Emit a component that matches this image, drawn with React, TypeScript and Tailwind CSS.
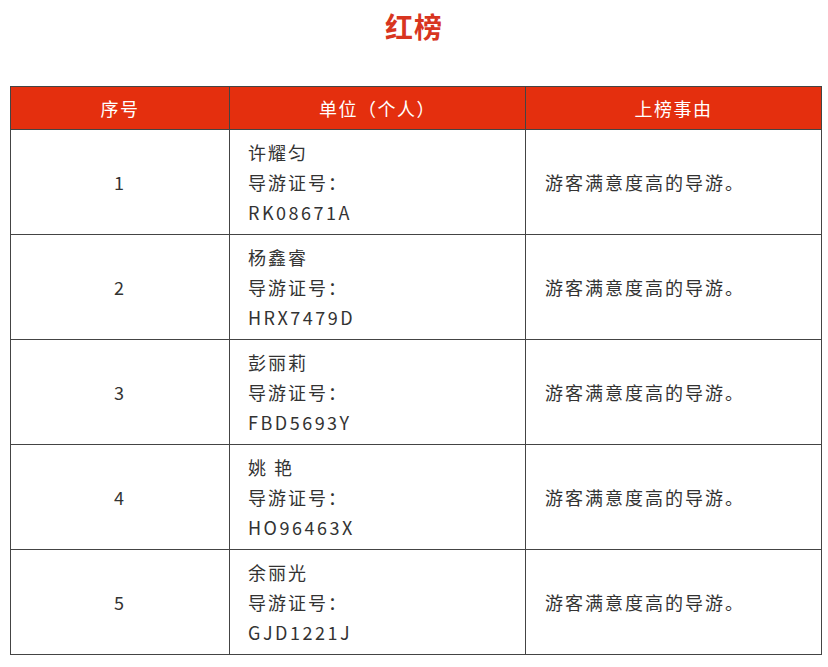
const rows = [
  { no: "1", name: "许耀匀", code: "RK08671A" },
  { no: "2", name: "杨鑫睿", code: "HRX7479D" },
  { no: "3", name: "彭丽莉", code: "FBD5693Y" },
  { no: "4", name: "姚 艳", code: "HO96463X" },
  { no: "5", name: "余丽光", code: "GJD1221J" },
];

export default function App() {
  return (
    <div
      className="min-h-screen bg-white text-[#333] pt-[9px]"
      style={{ fontFamily: '"Noto Sans CJK SC", "Noto Sans", sans-serif' }}
    >
      <h1 className="text-center text-[28px] leading-[34px] font-bold text-[#d8351f] tracking-[1px]">
        红榜
      </h1>

      <table className="mt-[43px] ml-[10px] w-[812px] border-collapse text-[18px] leading-[30px] tracking-[2px]">
        <thead>
          <tr className="bg-[#e42f0e] text-white tracking-[1.5px]">
            <th className="w-[219px] border border-[#444] py-[6px] font-normal">序号</th>
            <th className="w-[296px] border border-[#444] py-[6px] font-normal">单位（个人）</th>
            <th className="border border-[#444] py-[6px] font-normal">上榜事由</th>
          </tr>
        </thead>
        <tbody>
          {rows.map((r) => (
            <tr key={r.no}>
              <td className="border border-[#444] text-center py-[7px]">{r.no}</td>
              <td className="border border-[#444] py-[7px] px-[18px]">
                <div>{r.name}</div>
                <div>导游证号：</div>
                <div className="tracking-[2.5px]">{r.code}</div>
              </td>
              <td className="border border-[#444] py-[7px] px-[19px]">游客满意度高的导游。</td>
            </tr>
          ))}
        </tbody>
      </table>
    </div>
  );
}
